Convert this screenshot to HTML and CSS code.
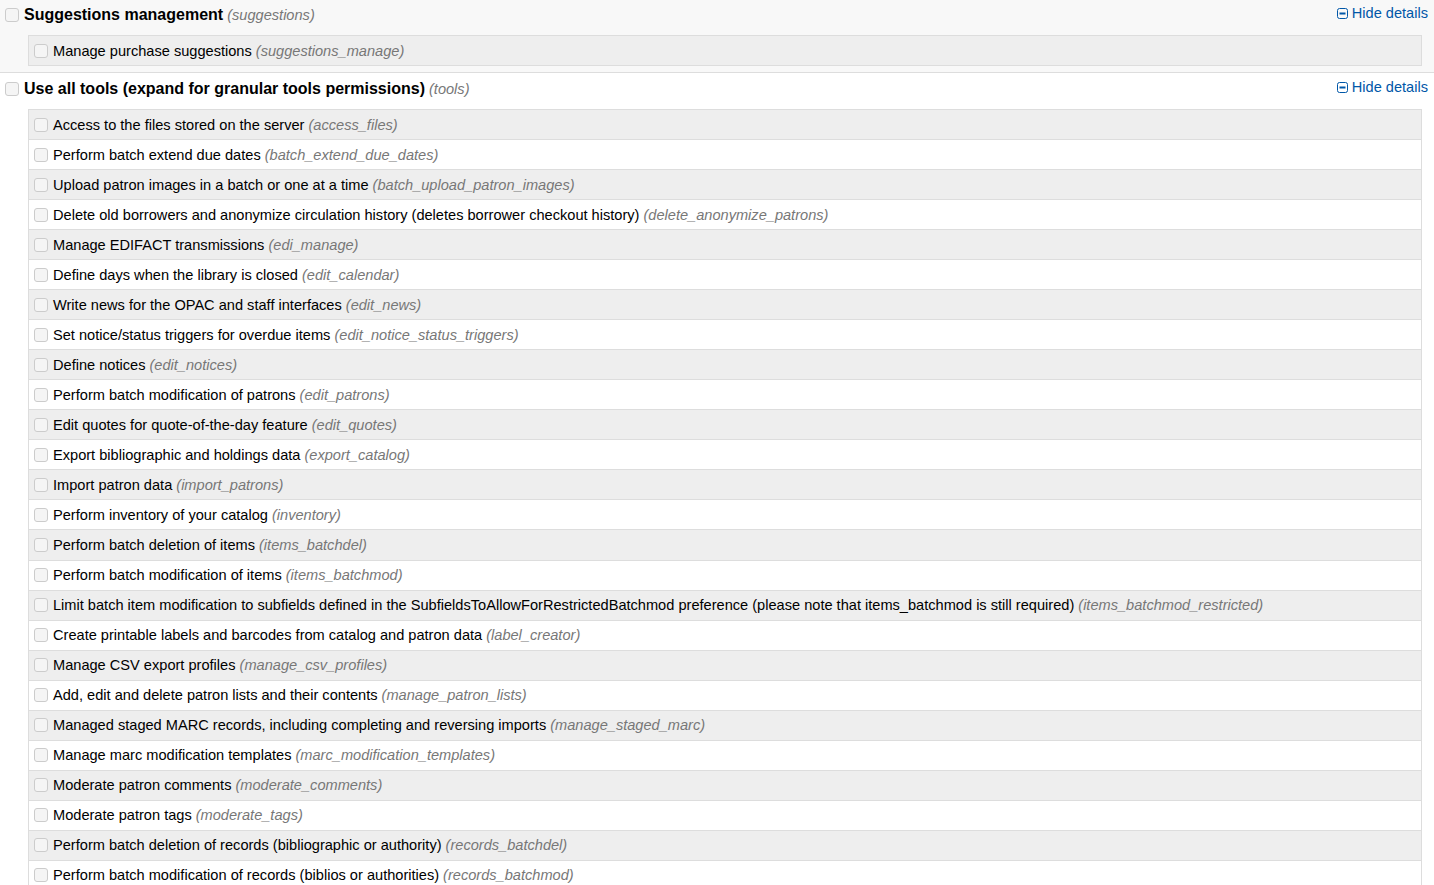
FILE: index.html
```html
<!doctype html>
<html>
  <head>
    <meta charset="utf-8">
    <title>Set permissions</title>
    <link rel="stylesheet" href="styles.css">
  </head>
  <body>
    <div class="permissions">
      <div class="perm-section shaded">
        <div class="perm-head">
          <label><input type="checkbox"> <span class="title">Suggestions management</span> <i class="code">(suggestions)</i></label>
          <a href="#" class="toggle"><svg width="11" height="11" viewBox="0 0 11 11"><rect x="0.5" y="0.5" width="10" height="10" rx="2" fill="none" stroke="currentColor"/><rect x="2.5" y="4.5" width="6" height="2" fill="currentColor"/></svg>Hide details</a>
        </div>
        <ul class="sub-perms">
          <li class="odd"><label><input type="checkbox"> Manage purchase suggestions <i class="code">(suggestions_manage)</i></label></li>
        </ul>
      </div>

      <div class="perm-section">
        <div class="perm-head">
          <label><input type="checkbox"> <span class="title">Use all tools (expand for granular tools permissions)</span> <i class="code">(tools)</i></label>
          <a href="#" class="toggle"><svg width="11" height="11" viewBox="0 0 11 11"><rect x="0.5" y="0.5" width="10" height="10" rx="2" fill="none" stroke="currentColor"/><rect x="2.5" y="4.5" width="6" height="2" fill="currentColor"/></svg>Hide details</a>
        </div>
        <ul class="sub-perms">
          <li class="odd"><label><input type="checkbox"> Access to the files stored on the server <i class="code">(access_files)</i></label></li>
          <li><label><input type="checkbox"> Perform batch extend due dates <i class="code">(batch_extend_due_dates)</i></label></li>
          <li class="odd"><label><input type="checkbox"> Upload patron images in a batch or one at a time <i class="code">(batch_upload_patron_images)</i></label></li>
          <li><label><input type="checkbox"> Delete old borrowers and anonymize circulation history (deletes borrower checkout history) <i class="code">(delete_anonymize_patrons)</i></label></li>
          <li class="odd"><label><input type="checkbox"> Manage EDIFACT transmissions <i class="code">(edi_manage)</i></label></li>
          <li><label><input type="checkbox"> Define days when the library is closed <i class="code">(edit_calendar)</i></label></li>
          <li class="odd"><label><input type="checkbox"> Write news for the OPAC and staff interfaces <i class="code">(edit_news)</i></label></li>
          <li><label><input type="checkbox"> Set notice/status triggers for overdue items <i class="code">(edit_notice_status_triggers)</i></label></li>
          <li class="odd"><label><input type="checkbox"> Define notices <i class="code">(edit_notices)</i></label></li>
          <li><label><input type="checkbox"> Perform batch modification of patrons <i class="code">(edit_patrons)</i></label></li>
          <li class="odd"><label><input type="checkbox"> Edit quotes for quote-of-the-day feature <i class="code">(edit_quotes)</i></label></li>
          <li><label><input type="checkbox"> Export bibliographic and holdings data <i class="code">(export_catalog)</i></label></li>
          <li class="odd"><label><input type="checkbox"> Import patron data <i class="code">(import_patrons)</i></label></li>
          <li><label><input type="checkbox"> Perform inventory of your catalog <i class="code">(inventory)</i></label></li>
          <li class="odd"><label><input type="checkbox"> Perform batch deletion of items <i class="code">(items_batchdel)</i></label></li>
          <li><label><input type="checkbox"> Perform batch modification of items <i class="code">(items_batchmod)</i></label></li>
          <li class="odd"><label><input type="checkbox"> Limit batch item modification to subfields defined in the SubfieldsToAllowForRestrictedBatchmod preference (please note that items_batchmod is still required) <i class="code">(items_batchmod_restricted)</i></label></li>
          <li><label><input type="checkbox"> Create printable labels and barcodes from catalog and patron data <i class="code">(label_creator)</i></label></li>
          <li class="odd"><label><input type="checkbox"> Manage CSV export profiles <i class="code">(manage_csv_profiles)</i></label></li>
          <li><label><input type="checkbox"> Add, edit and delete patron lists and their contents <i class="code">(manage_patron_lists)</i></label></li>
          <li class="odd"><label><input type="checkbox"> Managed staged MARC records, including completing and reversing imports <i class="code">(manage_staged_marc)</i></label></li>
          <li><label><input type="checkbox"> Manage marc modification templates <i class="code">(marc_modification_templates)</i></label></li>
          <li class="odd"><label><input type="checkbox"> Moderate patron comments <i class="code">(moderate_comments)</i></label></li>
          <li><label><input type="checkbox"> Moderate patron tags <i class="code">(moderate_tags)</i></label></li>
          <li class="odd"><label><input type="checkbox"> Perform batch deletion of records (bibliographic or authority) <i class="code">(records_batchdel)</i></label></li>
          <li><label><input type="checkbox"> Perform batch modification of records (biblios or authorities) <i class="code">(records_batchmod)</i></label></li>
        </ul>
      </div>
    </div>
  </body>
</html>
```
FILE: styles.css
```css
html, body {
  margin: 0;
  padding: 0;
}
body {
  font-family: "Liberation Sans", Arial, sans-serif;
  font-size: 14.6px;
  color: #000;
  background: #fff;
  overflow: hidden;
}

.perm-section {
  border-bottom: 1px solid #ddd;
  padding-bottom: 6px;
}
.perm-section.shaded {
  background: #f8f8f8;
}

.perm-head {
  display: flex;
  align-items: flex-start;
  padding: 5px 6px 0 5px;
  height: 30px;
}
.perm-head label {
  display: flex;
  align-items: center;
  line-height: 20px;
}
.perm-section + .perm-section .perm-head {
  padding-top: 6px;
  height: 30px;
}
.title {
  font-size: 16px;
  font-weight: bold;
  margin-left: 5px;
}
.perm-head .code {
  margin-left: 4px;
}

.code {
  color: #777;
  font-style: italic;
}

.toggle {
  margin-left: auto;
  margin-top: -2px;
  color: #0057a8;
  text-decoration: none;
  display: flex;
  align-items: center;
  gap: 4px;
  line-height: 20px;
}
.toggle svg {
  display: block;
}

input[type="checkbox"] {
  appearance: none;
  -webkit-appearance: none;
  box-sizing: border-box;
  width: 14px;
  height: 14px;
  margin: 0;
  border: 1px solid #ccc;
  border-radius: 3px;
  background: #f5f5f5;
  flex: none;
}

.sub-perms {
  list-style: none;
  margin: 0 12px 0 28px;
  padding: 0;
  border-left: 1px solid #ddd;
  border-right: 1px solid #ddd;
  border-bottom: 1px solid #ddd;
}
.sub-perms li {
  border-top: 1px solid #ddd;
  height: 29.04px;
  display: flex;
  align-items: center;
  padding-left: 5px;
  background: #fff;
}
.sub-perms li.odd {
  background: #eee;
}
.sub-perms label {
  display: flex;
  align-items: center;
  gap: 4px;
  white-space: nowrap;
}
.sub-perms label input {
  margin-right: 1px;
}
```
